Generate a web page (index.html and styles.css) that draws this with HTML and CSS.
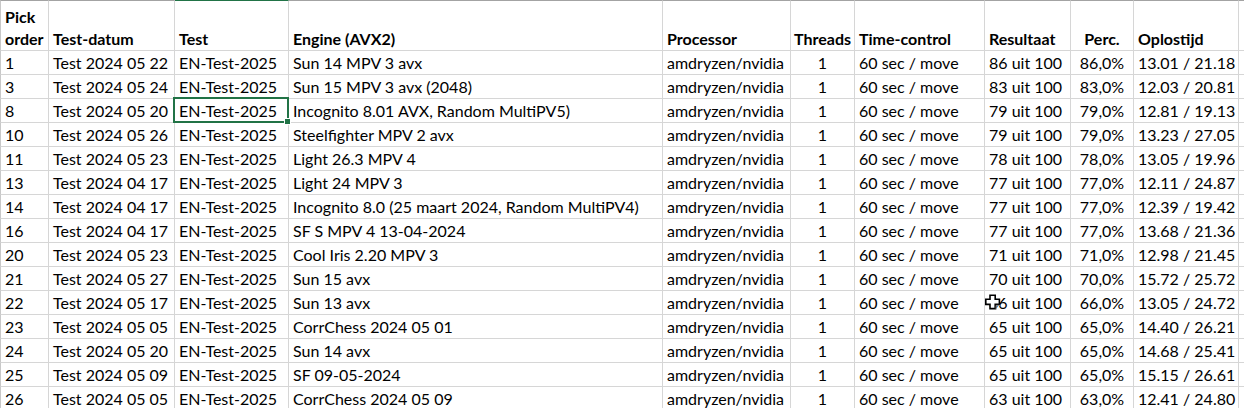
FILE: index.html
```html
<!DOCTYPE html>
<html lang="nl">
<head>
<meta charset="utf-8">
<title>Engine test</title>
<link rel="stylesheet" href="styles.css">
</head>
<body>
<div class="sheet">
  <div class="c h first"><span>Pick<br>order</span></div>
  <div class="c h">Test-datum</div>
  <div class="c h hsel">Test</div>
  <div class="c h">Engine (AVX2)</div>
  <div class="c h">Processor</div>
  <div class="c h ctr">Threads</div>
  <div class="c h">Time-control</div>
  <div class="c h">Resultaat</div>
  <div class="c h ctr">Perc.</div>
  <div class="c h">Oplostijd</div>
  <div class="c h"></div>

  <div class="c first">1</div><div class="c">Test 2024 05 22</div><div class="c">EN-Test-2025</div><div class="c">Sun 14 MPV 3 avx</div><div class="c">amdryzen/nvidia</div><div class="c ctr">1</div><div class="c">60 sec / move</div><div class="c">86 uit 100</div><div class="c ctr">86,0%</div><div class="c">13.01 / 21.18</div><div class="c"></div>

  <div class="c first">3</div><div class="c">Test 2024 05 24</div><div class="c">EN-Test-2025</div><div class="c">Sun 15 MPV 3 avx (2048)</div><div class="c">amdryzen/nvidia</div><div class="c ctr">1</div><div class="c">60 sec / move</div><div class="c">83 uit 100</div><div class="c ctr">83,0%</div><div class="c">12.03 / 20.81</div><div class="c"></div>

  <div class="c first">8</div><div class="c">Test 2024 05 20</div><div class="c sel">EN-Test-2025</div><div class="c">Incognito 8.01 AVX, Random MultiPV5)</div><div class="c">amdryzen/nvidia</div><div class="c ctr">1</div><div class="c">60 sec / move</div><div class="c">79 uit 100</div><div class="c ctr">79,0%</div><div class="c">12.81 / 19.13</div><div class="c"></div>

  <div class="c first">10</div><div class="c">Test 2024 05 26</div><div class="c">EN-Test-2025</div><div class="c">Steelfighter MPV 2 avx</div><div class="c">amdryzen/nvidia</div><div class="c ctr">1</div><div class="c">60 sec / move</div><div class="c">79 uit 100</div><div class="c ctr">79,0%</div><div class="c">13.23 / 27.05</div><div class="c"></div>

  <div class="c first">11</div><div class="c">Test 2024 05 23</div><div class="c">EN-Test-2025</div><div class="c">Light 26.3 MPV 4</div><div class="c">amdryzen/nvidia</div><div class="c ctr">1</div><div class="c">60 sec / move</div><div class="c">78 uit 100</div><div class="c ctr">78,0%</div><div class="c">13.05 / 19.96</div><div class="c"></div>

  <div class="c first">13</div><div class="c">Test 2024 04 17</div><div class="c">EN-Test-2025</div><div class="c">Light 24 MPV 3</div><div class="c">amdryzen/nvidia</div><div class="c ctr">1</div><div class="c">60 sec / move</div><div class="c">77 uit 100</div><div class="c ctr">77,0%</div><div class="c">12.11 / 24.87</div><div class="c"></div>

  <div class="c first">14</div><div class="c">Test 2024 04 17</div><div class="c">EN-Test-2025</div><div class="c">Incognito 8.0 (25 maart 2024, Random MultiPV4)</div><div class="c">amdryzen/nvidia</div><div class="c ctr">1</div><div class="c">60 sec / move</div><div class="c">77 uit 100</div><div class="c ctr">77,0%</div><div class="c">12.39 / 19.42</div><div class="c"></div>

  <div class="c first">16</div><div class="c">Test 2024 04 17</div><div class="c">EN-Test-2025</div><div class="c">SF S MPV 4 13-04-2024</div><div class="c">amdryzen/nvidia</div><div class="c ctr">1</div><div class="c">60 sec / move</div><div class="c">77 uit 100</div><div class="c ctr">77,0%</div><div class="c">13.68 / 21.36</div><div class="c"></div>

  <div class="c first">20</div><div class="c">Test 2024 05 23</div><div class="c">EN-Test-2025</div><div class="c">Cool Iris 2.20 MPV 3</div><div class="c">amdryzen/nvidia</div><div class="c ctr">1</div><div class="c">60 sec / move</div><div class="c">71 uit 100</div><div class="c ctr">71,0%</div><div class="c">12.98 / 21.45</div><div class="c"></div>

  <div class="c first">21</div><div class="c">Test 2024 05 27</div><div class="c">EN-Test-2025</div><div class="c">Sun 15 avx</div><div class="c">amdryzen/nvidia</div><div class="c ctr">1</div><div class="c">60 sec / move</div><div class="c">70 uit 100</div><div class="c ctr">70,0%</div><div class="c">15.72 / 25.72</div><div class="c"></div>

  <div class="c first">22</div><div class="c">Test 2024 05 17</div><div class="c">EN-Test-2025</div><div class="c">Sun 13 avx</div><div class="c">amdryzen/nvidia</div><div class="c ctr">1</div><div class="c">60 sec / move</div><div class="c cur">66 uit 100<svg class="cursor" width="16" height="16" viewBox="0 0 16 16"><path d="M5 1.2H10.2V5.2H14.4V10.4H10.2V14.6H5V10.4H0.8V5.2H5Z" fill="#fff" stroke="#000" stroke-width="1.6" stroke-linejoin="miter"/><path d="M11.2 15.6V11.4H15.4" fill="none" stroke="#8f8f8f" stroke-width="1"/></svg></div><div class="c ctr">66,0%</div><div class="c">13.05 / 24.72</div><div class="c"></div>

  <div class="c first">23</div><div class="c">Test 2024 05 05</div><div class="c">EN-Test-2025</div><div class="c">CorrChess 2024 05 01</div><div class="c">amdryzen/nvidia</div><div class="c ctr">1</div><div class="c">60 sec / move</div><div class="c">65 uit 100</div><div class="c ctr">65,0%</div><div class="c">14.40 / 26.21</div><div class="c"></div>

  <div class="c first">24</div><div class="c">Test 2024 05 20</div><div class="c">EN-Test-2025</div><div class="c">Sun 14 avx</div><div class="c">amdryzen/nvidia</div><div class="c ctr">1</div><div class="c">60 sec / move</div><div class="c">65 uit 100</div><div class="c ctr">65,0%</div><div class="c">14.68 / 25.41</div><div class="c"></div>

  <div class="c first">25</div><div class="c">Test 2024 05 09</div><div class="c">EN-Test-2025</div><div class="c">SF 09-05-2024</div><div class="c">amdryzen/nvidia</div><div class="c ctr">1</div><div class="c">60 sec / move</div><div class="c">65 uit 100</div><div class="c ctr">65,0%</div><div class="c">15.15 / 26.61</div><div class="c"></div>

  <div class="c first">26</div><div class="c">Test 2024 05 05</div><div class="c">EN-Test-2025</div><div class="c">CorrChess 2024 05 09</div><div class="c">amdryzen/nvidia</div><div class="c ctr">1</div><div class="c">60 sec / move</div><div class="c">63 uit 100</div><div class="c ctr">63,0%</div><div class="c">12.41 / 24.80</div><div class="c"></div>
</div>
</body>
</html>
```

FILE: styles.css
```css
html, body {
  margin: 0;
  padding: 0;
  background: #fff;
  overflow: hidden;
}
body {
  width: 1244px;
  height: 408px;
}
.sheet {
  display: grid;
  grid-template-columns: 49px 126px 114px 374px 128px 64px 130px 86px 63px 105px 1fr;
  grid-template-rows: 51px;
  grid-auto-rows: 24px;
  font-family: Lato, "Liberation Sans", sans-serif;
  font-size: 16px;
  color: #000;
}
.c {
  box-sizing: border-box;
  border-right: 1px solid #d6d6d6;
  border-bottom: 1px solid #d6d6d6;
  padding: 0 4px;
  line-height: 23px;
  white-space: nowrap;
  display: flex;
  align-items: flex-end;
  position: relative;
}
.first {
  border-left: 1px solid #c8c8c8;
}
.h {
  font-weight: 700;
  border-top: 1px solid #a3a3a3;
  line-height: 22px;
}
.hsel {
  border-top-color: #217346;
}
.ctr {
  justify-content: center;
}
.sel::after {
  content: "";
  position: absolute;
  left: -2px;
  top: -2px;
  right: -1px;
  bottom: -1px;
  border: 2px solid #217346;
}
.sel::before {
  content: "";
  position: absolute;
  right: -3px;
  bottom: -3px;
  width: 5px;
  height: 5px;
  background: #217346;
  border: 1px solid #fff;
  z-index: 2;
}
.cursor {
  position: absolute;
  left: 0;
  top: 3px;
}
```
